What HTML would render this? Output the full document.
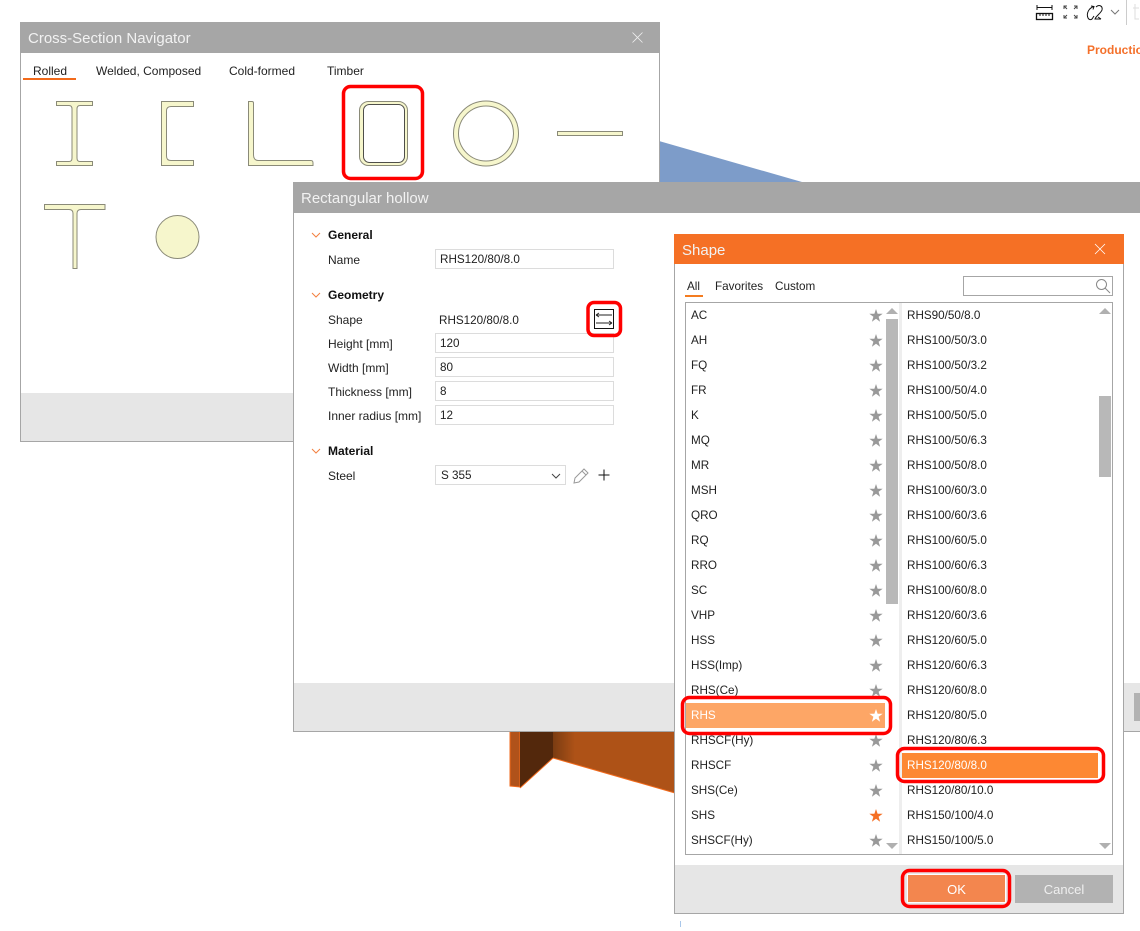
<!DOCTYPE html>
<html><head><meta charset="utf-8"><style>
html,body{margin:0;padding:0;background:#fff}
#p{position:relative;width:1140px;height:931px;overflow:hidden;background:#fff;font-family:"Liberation Sans",sans-serif;font-size:11.7px;color:#222}
#p div{position:absolute;box-sizing:border-box}
.t{white-space:nowrap;height:16px;line-height:18px}
.t.lb{font-size:12px;line-height:16px}
.ti{color:#f2f2f2;font-size:15px;height:20px;line-height:22px;white-space:nowrap}
.t.b{font-weight:bold;color:#111;font-size:12px;line-height:16px}
.in{background:#fff;border:1px solid #dcdcdc;height:20px;padding-left:4px;line-height:20px}
.l{left:691px}.r{left:907px}
svg{position:absolute;left:0;top:0}
</style></head><body><div id="p">

<svg width="1140" height="931" style="z-index:0">
<defs><linearGradient id="g" x1="553" y1="0" x2="575" y2="0" gradientUnits="userSpaceOnUse"><stop offset="0" stop-color="#7a3c12"/><stop offset="1" stop-color="#ae5217"/></linearGradient></defs>
<polygon points="659,141 802,182 659,182" fill="#7d9cc9"/>
<polygon points="510,730 520,730 520,787 510,786" fill="#b0521a" stroke="#f26a1b" stroke-width="1"/>
<polygon points="520,730 553,730 553,758 520,788" fill="#53280c"/>
<polygon points="553,730 675,730 675,793 553,758" fill="url(#g)"/>
<line x1="553" y1="758" x2="675" y2="793" stroke="#f26a1b"/>
<line x1="553" y1="758" x2="520" y2="788" stroke="#f26a1b"/>
<rect x="680" y="921" width="1" height="6" fill="#a9c7ea"/>
<g fill="none" stroke="#111" stroke-width="1">
<path d="M1037 7.500H1052M1037 5v5M1052 5v5"/>
<rect x="1036.500" y="13.500" width="16" height="6" stroke-width="1.300"/>
<path d="M1040 14v2M1043 14v2M1046 14v2M1049 14v2"/>
<path d="M1064 9V6h3M1064 6l3 3M1074 6h3v3M1077 6l-3 3M1064 15v3h3M1064 18l3-3M1077 15v3h-3M1077 18l-3-3" stroke="#444"/>
<path d="M1094 6.500C1089 8 1086 13 1088 18c1 2 3 2 4 1l2-3M1091 6l3 .5-1 3"/>
<path d="M1096 7c3-3 7-1 6 3-1 3-6 6-7 9h6M1098 17l3 2"/>
<path d="M1111 10l4 4 4-4" stroke="#777"/>
</g>
<rect x="1126" y="0" width="1" height="25" fill="#ccc"/>
<path d="M1135 4v15h4M1133 8h6" stroke="#ddd" fill="none"/>
</svg>
<div class="t b" style="left:1087px;top:42px;color:#f4702a;font-size:12px">Production</div>

<!-- Window 1 -->
<div style="left:20px;top:22px;width:640px;height:420px;background:#fff;border:1px solid #a6a6a6"></div>
<div style="left:20px;top:22px;width:640px;height:31px;background:#a6a6a6"></div>
<div class="ti" style="left:28px;top:28px">Cross-Section Navigator</div>
<div style="left:21px;top:393px;width:638px;height:48px;background:#e6e6e6"></div>
<div class="t lb" style="left:33px;top:63px">Rolled</div>
<div style="left:23px;top:78px;width:53px;height:2px;background:#f26a1b"></div>
<div class="t lb" style="left:96px;top:63px">Welded, Composed</div>
<div class="t lb" style="left:229px;top:63px">Cold-formed</div>
<div class="t lb" style="left:327px;top:63px">Timber</div>
<svg width="1140" height="931">
<path d="M632.500 32.500l10 10M642.500 32.500l-10 10" stroke="#eee" stroke-width=".8" fill="none"/>
<g fill="#f6f6cc" stroke="#8a8a78" stroke-width="1">
<path d="M56.500 101.500H92.500V105.500H80C78 105.500 77 107 77 109V158C77 160 78 161.500 80 161.500H92.500V165.500H56.500V161.500H69C71 161.500 72 160 72 158V109C72 107 71 105.500 69 105.500H56.500Z"/>
<path d="M161.500 101.500H193.500V106.500H171C168 106.500 166.500 108 166.500 111V156C166.500 159 168 160.500 171 160.500H193.500V165.500H161.500Z"/>
<path d="M248.500 101.500H252C253 101.500 253.500 102 253.500 103V155C253.500 158 255 160.500 258 160.500H311C312.500 160.500 313 161.500 313 163V165.500H248.500Z"/>
<rect x="359.500" y="101.500" width="48" height="64" rx="9" ry="9"/>
<circle cx="486" cy="133.500" r="32.500"/>
<rect x="557.500" y="131.500" width="65" height="4"/>
<path d="M44.500 204.500H105V209.500H81C78.500 209.500 77 211 77 213.500V268.500H73V213.500C73 211 71.500 209.500 69 209.500H44.500Z"/>
<circle cx="177.500" cy="237" r="21.500"/>
</g>
<rect x="363.500" y="104.500" width="41" height="58" rx="6" ry="6" fill="#fff" stroke="#4f4f4a"/>
<circle cx="486" cy="133.500" r="27.500" fill="#fff" stroke="#8a8a78"/>
<rect x="343.500" y="86.500" width="79" height="92" rx="7" fill="none" stroke="#f00" stroke-width="3.500"/>
</svg>

<!-- Window 2 -->
<div style="left:293px;top:182px;width:860px;height:550px;background:#fff;border:1px solid #a6a6a6"></div>
<div style="left:293px;top:182px;width:850px;height:31px;background:#a6a6a6"></div>
<div class="ti" style="left:301px;top:188px">Rectangular hollow</div>
<div style="left:294px;top:683px;width:850px;height:48px;background:#e6e6e6"></div>
<div style="left:1134px;top:693px;width:6px;height:28px;background:#b2b2b2"></div>

<div class="t b" style="left:328px;top:227px">General</div>
<div class="t lb" style="left:328px;top:252px">Name</div>
<div class="in" style="left:435px;top:249px;width:179px">RHS120/80/8.0</div>
<div class="t b" style="left:328px;top:287px">Geometry</div>
<div class="t lb" style="left:328px;top:312px">Shape</div>
<div class="t" style="left:439px;top:312px">RHS120/80/8.0</div>
<div class="t lb" style="left:328px;top:336px">Height [mm]</div>
<div class="in" style="left:435px;top:333px;width:179px">120</div>
<div class="t lb" style="left:328px;top:360px">Width [mm]</div>
<div class="in" style="left:435px;top:357px;width:179px">80</div>
<div class="t lb" style="left:328px;top:384px">Thickness [mm]</div>
<div class="in" style="left:435px;top:381px;width:179px">8</div>
<div class="t lb" style="left:328px;top:408px">Inner radius [mm]</div>
<div class="in" style="left:435px;top:405px;width:179px">12</div>
<div class="t b" style="left:328px;top:443px">Material</div>
<div class="t lb" style="left:328px;top:468px">Steel</div>
<div class="in" style="left:435px;top:465px;width:131px;padding-left:5px">S 355</div>
<svg width="1140" height="931">
<g fill="none" stroke="#f4803f" stroke-width="1">
<path d="M312 233l4 4 4-4M312 293l4 4 4-4M312 449l4 4 4-4"/>
</g>
<path d="M552 474l4 4 4-4" fill="none" stroke="#444"/>
<path d="M574 483l1-5 9-9 4 4-9 9zM582 471l4 4" fill="none" stroke="#999"/>
<path d="M604 469.500v11M598.500 475h11" stroke="#111" fill="none"/>
<rect x="594.500" y="309.500" width="19" height="19" fill="#fff" stroke="#111"/>
<path d="M596 315h16M596 315l3-2M596 315l3 2M596 323h16M612 323l-3-2M612 323l-3 2" stroke="#222" fill="none" stroke-width=".9"/>
<rect x="588" y="302.500" width="32.500" height="33" rx="6" fill="none" stroke="#f00" stroke-width="3.500"/>
</svg>

<!-- Window 3 -->
<div style="left:674px;top:234px;width:450px;height:680px;background:#fff;border:1px solid #a6a6a6"></div>
<div style="left:674px;top:234px;width:450px;height:30px;background:#f57025"></div>
<div class="ti" style="left:682px;top:240px">Shape</div>
<div style="left:675px;top:865px;width:448px;height:48px;background:#e6e6e6"></div>
<div class="t" style="left:687px;top:278px">All</div>
<div style="left:685px;top:295px;width:18px;height:2px;background:#f47c20"></div>
<div class="t" style="left:715px;top:278px">Favorites</div>
<div class="t" style="left:775px;top:278px">Custom</div>
<div style="left:963px;top:276px;width:150px;height:20px;background:#fff;border:1px solid #a6a6a6"></div>
<div style="left:685px;top:302px;width:428px;height:553px;background:#fff;border:1px solid #a6a6a6"></div>
<div style="left:899px;top:303px;width:3px;height:551px;background:#eee"></div>
<div style="left:886px;top:319px;width:12px;height:285px;background:#b8b8b8"></div>
<div style="left:1099px;top:396px;width:12px;height:81px;background:#b8b8b8"></div>
<div style="left:686px;top:703px;width:199px;height:25px;background:#fda666"></div>
<div style="left:902px;top:753px;width:196px;height:25px;background:#fd8833"></div>

<div class="t l" style="top:307px">AC</div>
<div class="t l" style="top:332px">AH</div>
<div class="t l" style="top:357px">FQ</div>
<div class="t l" style="top:382px">FR</div>
<div class="t l" style="top:407px">K</div>
<div class="t l" style="top:432px">MQ</div>
<div class="t l" style="top:457px">MR</div>
<div class="t l" style="top:482px">MSH</div>
<div class="t l" style="top:507px">QRO</div>
<div class="t l" style="top:532px">RQ</div>
<div class="t l" style="top:557px">RRO</div>
<div class="t l" style="top:582px">SC</div>
<div class="t l" style="top:607px">VHP</div>
<div class="t l" style="top:632px">HSS</div>
<div class="t l" style="top:657px">HSS(Imp)</div>
<div class="t l" style="top:682px">RHS(Ce)</div>
<div class="t l" style="top:707px;color:#fff">RHS</div>
<div class="t l" style="top:732px">RHSCF(Hy)</div>
<div class="t l" style="top:757px">RHSCF</div>
<div class="t l" style="top:782px">SHS(Ce)</div>
<div class="t l" style="top:807px">SHS</div>
<div class="t l" style="top:832px">SHSCF(Hy)</div>

<div class="t r" style="top:307px">RHS90/50/8.0</div>
<div class="t r" style="top:332px">RHS100/50/3.0</div>
<div class="t r" style="top:357px">RHS100/50/3.2</div>
<div class="t r" style="top:382px">RHS100/50/4.0</div>
<div class="t r" style="top:407px">RHS100/50/5.0</div>
<div class="t r" style="top:432px">RHS100/50/6.3</div>
<div class="t r" style="top:457px">RHS100/50/8.0</div>
<div class="t r" style="top:482px">RHS100/60/3.0</div>
<div class="t r" style="top:507px">RHS100/60/3.6</div>
<div class="t r" style="top:532px">RHS100/60/5.0</div>
<div class="t r" style="top:557px">RHS100/60/6.3</div>
<div class="t r" style="top:582px">RHS100/60/8.0</div>
<div class="t r" style="top:607px">RHS120/60/3.6</div>
<div class="t r" style="top:632px">RHS120/60/5.0</div>
<div class="t r" style="top:657px">RHS120/60/6.3</div>
<div class="t r" style="top:682px">RHS120/60/8.0</div>
<div class="t r" style="top:707px">RHS120/80/5.0</div>
<div class="t r" style="top:732px">RHS120/80/6.3</div>
<div class="t r" style="top:757px;color:#fff">RHS120/80/8.0</div>
<div class="t r" style="top:782px">RHS120/80/10.0</div>
<div class="t r" style="top:807px">RHS150/100/4.0</div>
<div class="t r" style="top:832px">RHS150/100/5.0</div>

<div style="left:907px;top:874px;width:99px;height:29px;background:#f3864e;border:1px solid #fff;color:#fff;text-align:center;line-height:29px;font-size:13px">OK</div>
<div style="left:1015px;top:875px;width:98px;height:28px;background:#b2b2b2;color:#efefef;text-align:center;line-height:30px;font-size:13px">Cancel</div>

<svg width="1140" height="931">
<defs><polygon id="s" points="0,-7 1.600,-2.200 6.700,-2.200 2.600,.8 4.100,5.700 0,2.700 -4.100,5.700 -2.600,.8 -6.700,-2.200 -1.600,-2.200"/></defs>
<path d="M1095 244l10 10M1105 244l-10 10" stroke="#fff" stroke-width=".8" fill="none"/>
<circle cx="1101.500" cy="284.500" r="5" fill="none" stroke="#888"/>
<path d="M1105 288l5 5" stroke="#888"/>
<g fill="#999">
<use href="#s" x="876" y="316"/><use href="#s" x="876" y="341"/><use href="#s" x="876" y="366"/><use href="#s" x="876" y="391"/>
<use href="#s" x="876" y="416"/><use href="#s" x="876" y="441"/><use href="#s" x="876" y="466"/><use href="#s" x="876" y="491"/>
<use href="#s" x="876" y="516"/><use href="#s" x="876" y="541"/><use href="#s" x="876" y="566"/><use href="#s" x="876" y="591"/>
<use href="#s" x="876" y="616"/><use href="#s" x="876" y="641"/><use href="#s" x="876" y="666"/><use href="#s" x="876" y="691"/>
<use href="#s" x="876" y="741"/><use href="#s" x="876" y="766"/><use href="#s" x="876" y="791"/><use href="#s" x="876" y="841"/>
</g>
<use href="#s" x="876" y="716" fill="#fff"/>
<use href="#s" x="876" y="816" fill="#f57025"/>
<g fill="#b0b0b0">
<polygon points="886,314 892,308 898,314"/>
<polygon points="1099,314 1105,308 1111,314"/>
<polygon points="886,843 892,849 898,843"/>
<polygon points="1099,843 1105,849 1111,843"/>
</g>
<g fill="none" stroke="#f00" stroke-width="3.500">
<rect x="682.500" y="697.500" width="208" height="36" rx="7"/>
<rect x="897.500" y="748.500" width="206" height="33" rx="7"/>
<rect x="902.500" y="870.500" width="107" height="36" rx="7"/>
</g>
</svg>
</div></body></html>
